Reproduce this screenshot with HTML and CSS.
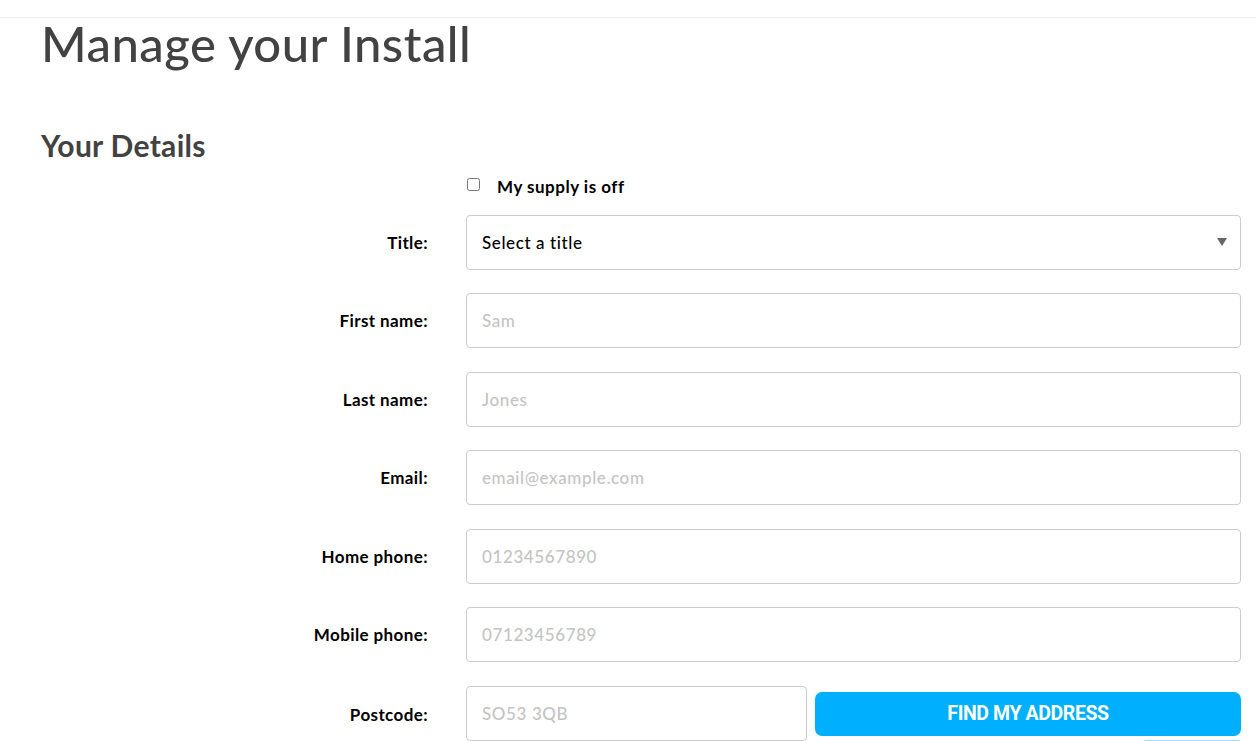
FILE: index.html
```html
<!DOCTYPE html>
<html lang="en">
<head>
<meta charset="utf-8">
<title>Manage your Install</title>
<link rel="stylesheet" href="styles.css">
</head>
<body>
<div class="topbar"></div>
<main class="page">
  <h1 class="page-title">Manage your Install</h1>
  <h2 class="section-title">Your Details</h2>
  <form class="details-form">
    <div class="check-row">
      <label class="check-label"><input type="checkbox" class="checkbox"><span>My supply is off</span></label>
    </div>
    <div class="form-row">
      <label class="field-label">Title:</label>
      <div class="select-box">
        <span class="select-text">Select a title</span>
        <svg class="select-arrow" width="10" height="8" viewBox="0 0 10 8"><polygon points="0,0 10,0 5,8" fill="#666"/></svg>
      </div>
    </div>
    <div class="form-row">
      <label class="field-label">First name:</label>
      <input class="text-input" placeholder="Sam">
    </div>
    <div class="form-row">
      <label class="field-label">Last name:</label>
      <input class="text-input" placeholder="Jones">
    </div>
    <div class="form-row">
      <label class="field-label">Email:</label>
      <input class="text-input" placeholder="email@example.com">
    </div>
    <div class="form-row">
      <label class="field-label">Home phone:</label>
      <input class="text-input" placeholder="01234567890">
    </div>
    <div class="form-row">
      <label class="field-label">Mobile phone:</label>
      <input class="text-input" placeholder="07123456789">
    </div>
    <div class="form-row">
      <label class="field-label">Postcode:</label>
      <div class="postcode-group">
        <input class="text-input postcode-input" placeholder="SO53 3QB">
        <div class="button-col">
          <button type="button" class="find-btn">FIND MY ADDRESS</button>
          <div class="next-hint"></div>
        </div>
      </div>
    </div>
  </form>
</main>
</body>
</html>
```
FILE: styles.css
```css
html, body {
  margin: 0;
  padding: 0;
  background: #fff;
}
body {
  font-family: "Lato", "Noto Sans", sans-serif;
  color: #000;
  overflow: hidden;
  height: 741px;
}
.topbar {
  height: 17px;
  width: 1256px;
  border-bottom: 1px solid #eeeeee;
}
.page {
  padding: 0 16px 0 41px;
}
.page-title {
  margin: 0;
  padding-top: 0;
  font-size: 49px;
  line-height: 50px;
  font-weight: 500;
  color: #424242;
  letter-spacing: 0.5px;
}
.section-title {
  margin: 59px 0 0 0;
  font-size: 30px;
  line-height: 36px;
  font-weight: 700;
  color: #424242;
  letter-spacing: 0.3px;
}
.details-form {
  display: flex;
  flex-direction: column;
  gap: 23.5px;
}
.check-row {
  padding-left: 425px;
  height: 24px;
  margin-top: 13px;
  margin-bottom: -9px;
}
.check-label {
  display: flex;
  align-items: center;
  gap: 17px;
  font-size: 17px;
  font-weight: 700;
  letter-spacing: 0.5px;
}
.checkbox {
  margin: 0 0 0 1px;
  width: 13px;
  height: 13px;
  position: relative;
  top: -2px;
}
.form-row {
  display: grid;
  grid-template-columns: 387px 1fr;
  column-gap: 38px;
  align-items: center;
}
.field-label {
  text-align: right;
  font-size: 17px;
  font-weight: 700;
  color: #000;
  letter-spacing: 0.4px;
}
.text-input, .select-box {
  box-sizing: border-box;
  height: 55px;
  width: 100%;
  border: 1px solid #cccccc;
  border-radius: 4px;
  padding: 0 15px;
  font-family: inherit;
  font-size: 17px;
  letter-spacing: 0.6px;
  background: #fff;
  color: #000;
}
.text-input::placeholder {
  color: #c4c4c4;
  font-weight: 500;
}
.select-box {
  display: flex;
  align-items: center;
  justify-content: space-between;
  padding-right: 13px;
}
.select-text {
  font-size: 17px;
  font-weight: 500;
}
.postcode-group {
  display: flex;
  gap: 8px;
  align-items: flex-start;
}
.postcode-input {
  width: 341px;
  flex: none;
}
.button-col {
  flex: 1;
  padding-top: 6px;
}
.find-btn {
  display: block;
  width: 100%;
  height: 44px;
  border: none;
  border-radius: 7px;
  background: #00b0ff;
  color: #fff;
  font-family: "Roboto", "Lato", sans-serif;
  font-weight: 700;
  font-size: 19.5px;
  letter-spacing: -0.4px;
}
.next-hint {
  margin: 4px 0 0 328px;
  width: 98px;
  height: 4px;
  background: #9fdcff;
  border-radius: 3px 3px 0 0;
}
```
